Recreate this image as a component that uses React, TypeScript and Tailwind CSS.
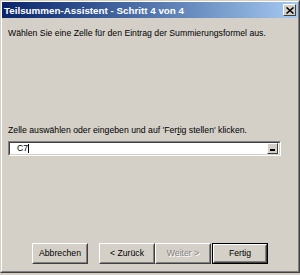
import React from "react"

const Btn: React.FC<{ label: React.ReactNode; disabled?: boolean; isDefault?: boolean; className?: string }> = ({ label, disabled, isDefault, className }) => {
    const inner = (
        <div className="h-full w-full border border-t-white border-l-white border-b-[#404040] border-r-[#404040]">
            <div className="h-full w-full border border-t-[#d4d0c8] border-l-[#d4d0c8] border-b-[#808080] border-r-[#808080] flex items-center justify-center">
                {disabled ? (
                    <span className="text-[#808080] [text-shadow:1px_1px_0_#ffffff]">{label}</span>
                ) : (
                    <span className="text-black">{label}</span>
                )}
            </div>
        </div>
    )
    if (isDefault) {
        return <div className={"h-[21px] w-[56px] border border-black " + (className ?? "")}>{inner}</div>
    }
    return <div className={"h-[21px] w-[56px] " + (className ?? "")}>{inner}</div>
}

export default function App() {
    return (
        <div className="w-[300px] h-[275px] bg-[#d4d0c8] text-[8.7px] leading-[11px] text-black" style={{ fontFamily: '"Liberation Sans", Arial, sans-serif' }}>
            <div className="w-[300px] h-[273px] border border-t-[#d4d0c8] border-l-[#d4d0c8] border-b-[#404040] border-r-[#404040]">
                <div className="h-full w-full border border-t-white border-l-white border-b-[#808080] border-r-[#808080] flex flex-col">
                    {/* title bar */}
                    <div className="h-[16px] bg-gradient-to-r from-[#0a246a] to-[#a6caf0] flex items-center pl-[2px] pr-[2px]">
                        <span className="text-white font-bold text-[9.8px] flex-1">Teilsummen-Assistent - Schritt 4 von 4</span>
                        <div className="w-[13px] h-[12px] bg-[#d4d0c8] border border-t-white border-l-white border-b-[#404040] border-r-[#404040] flex items-center justify-center">
                            <svg width="8" height="7" viewBox="0 0 8 7">
                                <path d="M0.5 0.5 L7.5 6.5 M7.5 0.5 L0.5 6.5" stroke="#000" strokeWidth="1.5" />
                            </svg>
                        </div>
                    </div>

                    <div className="flex flex-col px-[6px]">
                        <p className="mt-[10px]">Wählen Sie eine Zelle für den Eintrag der Summierungsformel aus.</p>
                        <p className="mt-[86px]">
                            Zelle auswählen oder eingeben und auf 'Fer<span className="underline">t</span>ig stellen' klicken.
                        </p>
                        <div className="mt-[5px] w-[273px] h-[15px] border border-t-[#808080] border-l-[#808080] border-b-white border-r-white">
                            <div className="h-full w-full border border-t-[#404040] border-l-[#404040] border-b-[#d4d0c8] border-r-[#d4d0c8] bg-white flex items-center">
                                <span className="ml-[7px]">C7</span>
                                <span className="w-px h-[9px] bg-black"></span>
                                <div className="flex-1"></div>
                                <div className="w-[11px] h-[11px] mr-px bg-[#d4d0c8] border border-t-white border-l-white border-b-[#404040] border-r-[#404040] flex items-end justify-center pb-[2px]">
                                    <div className="w-[5px] h-[2px] bg-black"></div>
                                </div>
                            </div>
                        </div>
                    </div>

                    <div className="mt-[87px] flex flex-row pl-[30px]">
                        <Btn label="Abbrechen" />
                        <Btn label="< Zurück" className="ml-[11px]" />
                        <Btn label="Weiter >" disabled />
                        <Btn label="Fertig" isDefault className="ml-px" />
                    </div>
                </div>
            </div>
        </div>
    )
}
